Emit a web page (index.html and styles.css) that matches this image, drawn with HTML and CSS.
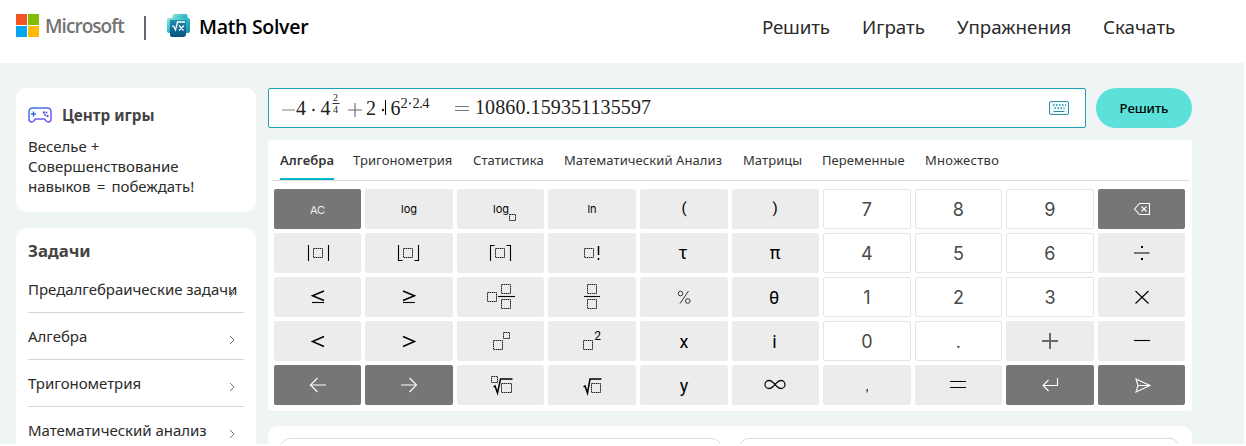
FILE: index.html
```html
<!DOCTYPE html>
<html lang="ru">
<head>
<meta charset="utf-8">
<title>Math Solver</title>
<link rel="stylesheet" href="styles.css">
</head>
<body>
<div class="page">
  <header class="header">
    <svg class="ms-mark" width="24" height="24" viewBox="0 0 24 24"><path fill="#f65325" d="M0 0h11v11H0z"/><path fill="#81bc06" d="M12 0h11v11H12z"/><path fill="#05a6f0" d="M0 12h11v11H0z"/><path fill="#ffba08" d="M12 12h11v11H12z"/></svg>
    <span class="ms-name">Microsoft</span>
    <span class="bar"></span>
    <svg class="app-mark" width="24" height="24" viewBox="0 0 24 24">
      <defs>
        <linearGradient id="ga" x1="0" y1="0" x2="1" y2="1"><stop offset="0" stop-color="#8ceadb"/><stop offset=".5" stop-color="#2fb6c4"/><stop offset="1" stop-color="#1a8fae"/></linearGradient>
        <linearGradient id="gb" x1="0" y1="0" x2="0" y2="1"><stop offset="0" stop-color="#1c8fb0"/><stop offset="1" stop-color="#0b4f7c"/></linearGradient>
      </defs>
      <rect x="5.500" y="0" width="15" height="14" rx="2" fill="url(#ga)"/>
      <rect x="0" y="4" width="23" height="15" rx="2" fill="url(#ga)"/>
      <path d="M3 6h16v14a3 3 0 0 1-3 3H5a2 2 0 0 1-2-2z" fill="url(#gb)"/>
      <path d="M5 12.500l1.500-.5 2 4 2-8H18M12 11.500l4.500 5M17 11.500l-5 5" fill="none" stroke="#fff" stroke-width="1.300"/>
    </svg>
    <span class="app-name">Math Solver</span>
    <nav class="nav"><a class="n1">Решить</a><a class="n2">Играть</a><a class="n3">Упражнения</a><a class="n4">Скачать</a></nav>
  </header>
  <div class="content">
    <aside class="side">
      <section class="card game">
        <h2 class="game-title">
          <svg width="25" height="16" viewBox="0 0 25 16" fill="none"><defs><linearGradient id="gp" x1="0" y1="0" x2="1" y2="1"><stop offset="0" stop-color="#2f7be0"/><stop offset="1" stop-color="#8a4df0"/></linearGradient></defs><path d="M5 1H19.500Q23 1 23 5V12Q23 15 20.500 15Q18.500 15 16.500 12H7.500Q5.500 15 3.500 15Q1 15 1 12V5Q1 1 5 1Z" stroke="url(#gp)" stroke-width="1.500"/><path d="M5.500 4.500v5M3 7h5" stroke="#3f67e3" stroke-width="1.500"/><g fill="#6455ea"><circle cx="16" cy="5.500" r="1.200"/><circle cx="18.500" cy="5.500" r="1"/><circle cx="17" cy="8" r="1"/><circle cx="19.500" cy="9" r="1.200"/></g></svg>
          <span>Центр игры</span>
        </h2>
        <p class="game-text">Веселье +<br>Совершенствование<br><span class="l3">навыков = побеждать!</span></p>
      </section>
      <section class="card tasks">
        <h2 class="tasks-title">Задачи</h2>
        <a class="task"><span>Предалгебраические задачи</span><svg class="chev" viewBox="0 0 6 10"><path d="M1 1l4 4-4 4"/></svg></a>
        <a class="task"><span>Алгебра</span><svg class="chev" viewBox="0 0 6 10"><path d="M1 1l4 4-4 4"/></svg></a>
        <a class="task"><span>Тригонометрия</span><svg class="chev" viewBox="0 0 6 10"><path d="M1 1l4 4-4 4"/></svg></a>
        <a class="task"><span>Математический анализ</span><svg class="chev" viewBox="0 0 6 10"><path d="M1 1l4 4-4 4"/></svg></a>
      </section>
    </aside>
    <main class="main">
      <div class="entry">
        <div class="field">
          <svg class="formula" width="400" height="38" viewBox="0 0 400 38">
            <path d="M13 21h13" stroke="#999" stroke-width="1.200"/><path d="M79 21h14M86 14v14" stroke="#666" stroke-width="1.100"/>
            <text x="27" y="26">4</text><circle cx="44.500" cy="21" r="1.200"/>
            <text x="51.500" y="26">4</text>
            <text class="tiny" x="64" y="12">2</text><path d="M63.500 14.500h7" stroke="#333"/><text class="tiny" x="64" y="23.500">4</text>
            <text x="97" y="26">2</text><circle cx="114" cy="21" r="1.200"/>
            <path d="M116.500 11v15" stroke="#000"/>
            <text x="121.500" y="26">6</text>
            <text class="sup" x="131.500" y="18.500">2</text><circle cx="141" cy="14.500" r="1"/><text class="sup" x="143.500" y="18.500" textLength="17">2.4</text>
            <path d="M186 17.500h14M186 21.500h14" stroke="#777"/>
            <text x="206" y="25" textLength="176">10860.159351135597</text>
          </svg>
          <svg class="kbd" width="21" height="14" viewBox="0 0 21 14"><rect x=".5" y=".5" width="19" height="13" rx="1.500" fill="#eefafb" stroke="#2f8ba0"/><path d="M4 4h13M5.500 7h10" stroke="#2f8ba0" stroke-width="1.500" stroke-dasharray="1.500 1.500"/><path d="M4.500 10.500h11" stroke="#2f8ba0"/></svg>
        </div>
        <button class="solve">Решить</button>
      </div>
      <div class="pad">
        <div class="tabs"><span class="tab on">Алгебра</span><span class="tab b">Тригонометрия</span><span class="tab c">Статистика</span><span class="tab d">Математический Анализ</span><span class="tab e">Матрицы</span><span class="tab f">Переменные</span><span class="tab g">Множество</span></div>
        <div class="keys">
          <div class="key dark"><svg viewBox="-24 -20 48 40"><text class="s light" x="-.5" y="4.500">AC</text></svg></div>
          <div class="key"><svg viewBox="-24 -20 48 40"><text class="s" y="4">log</text></svg></div>
          <div class="key"><svg viewBox="-24 -20 48 40"><text class="s" y="4">log</text><path class="box" d="M8.500 5.500h6v6h-6z"/></svg></div>
          <div class="key"><svg viewBox="-24 -20 48 40"><text class="s" y="4">ln</text></svg></div>
          <div class="key"><svg viewBox="-24 -20 48 40"><text class="p" y="4">(</text></svg></div>
          <div class="key"><svg viewBox="-24 -20 48 40"><text class="p" y="4">)</text></svg></div>
          <div class="key num">7</div><div class="key num">8</div><div class="key num">9</div>
          <div class="key dark"><svg viewBox="-24 -20 48 40"><path class="w" d="M-6.500 0l5-5.500h10v11h-10zM.5-2.500l5 5M5.500-2.500l-5 5"/></svg></div>

          <div class="key"><svg viewBox="-24 -20 48 40"><path class="k" d="M-9.500-8v16M10.500-8v16"/><path class="box" d="M-4.500-4.500h9v9h-9z"/></svg></div>
          <div class="key"><svg viewBox="-24 -20 48 40"><path class="k" d="M-10.500-8v15.500h4M9.500-8v15.500h-4"/><path class="box" d="M-5.500-4.500h9v9h-9z"/></svg></div>
          <div class="key"><svg viewBox="-24 -20 48 40"><path class="k" d="M-10.500 8v-15.500h4M9.500 8v-15.500h-4"/><path class="box" d="M-5.500-4.500h9v9h-9z"/></svg></div>
          <div class="key"><svg viewBox="-24 -20 48 40"><path class="box" d="M-7.500-4.500h9v9h-9z"/><path class="t" d="M6.500-7v9M6.500 5v2"/></svg></div>
          <div class="key"><svg viewBox="-24 -20 48 40"><text class="m" x="-1" y="6">τ</text></svg></div>
          <div class="key"><svg viewBox="-24 -20 48 40"><text class="m" y="6">π</text></svg></div>
          <div class="key num">4</div><div class="key num">5</div><div class="key num">6</div>
          <div class="key"><svg viewBox="-24 -20 48 40"><path d="M-7 0h15.500" stroke="#777" stroke-width="2"/><path d="M0-7h2v2H0zM0 5h2v2H0z"/></svg></div>

          <div class="key"><svg viewBox="-24 -20 48 40"><path class="t" d="M6-6l-11.500 4.700L6 3.500"/><path class="k" d="M-6 5.500H6"/></svg></div>
          <div class="key"><svg viewBox="-24 -20 48 40"><path class="t" d="M-6-6L5.500-1.300L-6 3.500"/><path class="k" d="M-6 5.500H6"/></svg></div>
          <div class="key"><svg viewBox="-24 -20 48 40"><path class="box" d="M-13.500-4.500h9v9h-9zM.5-12.500h9v9h-9zM.5 2.500h9v9h-9z"/><path class="k" d="M-3-.5h17"/></svg></div>
          <div class="key"><svg viewBox="-24 -20 48 40"><path class="box" d="M-4.500-12.500h9v9h-9zM-4.500 2.500h9v9h-9z"/><path class="k" d="M-8-.5H8"/></svg></div>
          <div class="key"><svg viewBox="-24 -20 48 40"><g class="o"><circle cx="-3.500" cy="-3.500" r="2.300"/><circle cx="3.800" cy="4" r="2.300"/><path d="M4.500-6L-4 6.500"/></g></svg></div>
          <div class="key"><svg viewBox="-24 -20 48 40"><text class="m" x="-1" y="6.500">θ</text></svg></div>
          <div class="key num">1</div><div class="key num">2</div><div class="key num">3</div>
          <div class="key"><svg viewBox="-24 -20 48 40"><path class="k" d="M-5.500-6L7.500 6.500M7.500-6L-5.500 6.500"/></svg></div>

          <div class="key"><svg viewBox="-24 -20 48 40"><path class="t" d="M6-4.500l-11.500 5L6 5.500"/></svg></div>
          <div class="key"><svg viewBox="-24 -20 48 40"><path class="t" d="M-6-4.500L5.500.5L-6 5.500"/></svg></div>
          <div class="key"><svg viewBox="-24 -20 48 40"><path class="box" d="M-7.500-.5h9v9h-9zM2.500-8.500h6v6h-6z"/></svg></div>
          <div class="key"><svg viewBox="-24 -20 48 40"><path class="box" d="M-8.500-.5h9v9h-9z"/><text class="two" x="5.500" y="-1.500">2</text></svg></div>
          <div class="key"><svg viewBox="-24 -20 48 40"><text class="m" y="7">x</text></svg></div>
          <div class="key"><svg viewBox="-24 -20 48 40"><text class="m" x="-.5" y="7">i</text></svg></div>
          <div class="key num">0</div><div class="key num">.</div>
          <div class="key"><svg viewBox="-24 -20 48 40"><path d="M-8 0H8M0-8V8" stroke="#000" stroke-opacity=".55" stroke-width="2"/></svg></div>
          <div class="key"><svg viewBox="-24 -20 48 40"><path class="k" d="M-7-.5H9"/></svg></div>

          <div class="key dark"><svg viewBox="-24 -20 48 40"><path d="M-8 0H8" stroke="#bbb" stroke-width="2"/><path class="w" d="M-.5-7l-7 7 7 7"/></svg></div>
          <div class="key dark"><svg viewBox="-24 -20 48 40"><path d="M-8 0H7" stroke="#bbb" stroke-width="2"/><path class="w" d="M.5-7l7 7-7 7"/></svg></div>
          <div class="key"><svg viewBox="-24 -20 48 40"><path class="box" d="M-9.500-8.500h6v6h-6zM.5-1.500h10v9H.5z"/><path class="t" d="M-7.500 2l1.500-1 2.500 7L-.5-6H11.500"/></svg></div>
          <div class="key"><svg viewBox="-24 -20 48 40"><path class="box" d="M-.5-1.500h9v9h-9z"/><path class="t" d="M-8.500 2l1.500-1 2.500 7L-2-6H9.500"/></svg></div>
          <div class="key"><svg viewBox="-24 -20 48 40"><text class="m" y="7">y</text></svg></div>
          <div class="key"><svg viewBox="-24 -20 48 40"><path class="inf" d="M0 -.5C-3-4-4-4.500-6-4.500a4 4 0 0 0 0 8C-4 3.500-3 3 0-.5C3-4 4-4.500 6-4.500a4 4 0 0 1 0 8C4 3.500 3 3 0-.5Z"/></svg></div>
          <div class="key"><svg viewBox="-24 -20 48 40"><path d="M-.5 4h1.500v1.500l-1 2h-.8l.5-2z" fill="#333"/></svg></div>
          <div class="key"><svg viewBox="-24 -20 48 40"><path class="k" d="M-8-3.500H8M-8 2.500H8"/></svg></div>
          <div class="key dark"><svg viewBox="-24 -20 48 40"><path class="w" d="M7.500-7V.5H-7M-1.500-5l-5.500 5.500 5.500 5.500"/></svg></div>
          <div class="key dark"><svg viewBox="-24 -20 48 40"><path class="w" d="M-5-6L9 .5-5 7l2-6.500zM-3 .5H8"/></svg></div>
        </div>
      </div>
      <div class="results"><div class="result"></div><div class="result"></div></div>
    </main>
  </div>
</div>
</body>
</html>
```
FILE: styles.css
```css
* { box-sizing: border-box; }
body { margin: 0; background: #fff; font-family: "Noto Sans", "Open Sans", sans-serif; color: #2b2b2b; }
.page { width: 1244px; height: 444px; overflow: hidden; background: #eff5f5; }
.header { height: 63px; background: #fff; display: flex; align-items: flex-start; padding-left: 16px; }
.ms-mark { margin-top: 14px; }
.ms-name { margin: 12px 0 0 5px; width: 80px; font: 600 19px/28px "Open Sans", sans-serif; letter-spacing: -.95px; color: #737373; }
.bar { width: 1.5px; height: 24px; margin: 16px 0 0 19px; background: #667; }
.app-mark { margin: 14px 0 0 21.5px; }
.app-name { margin: 13px 0 0 8px; width: 112px; font: 600 19.5px/28px "Open Sans", sans-serif; letter-spacing: -.3px; color: #000; white-space: nowrap; }
.nav { display: flex; margin: 13px 0 0 451px; font-size: 18.8px; line-height: 28px; white-space: nowrap; }
.n1 { width: 100px; letter-spacing: -.2px; }
.n2 { width: 95px; }
.n3 { width: 146px; }
.content { display: flex; gap: 12px; padding: 25px 0 0 16px; }
.side { width: 240px; display: flex; flex-direction: column; gap: 16px; }
.card { background: #fff; border-radius: 10px; padding: 0 12px; }
.game { height: 124px; padding-top: 17px; }
.game-title { margin: 0; display: flex; align-items: center; gap: 9px; font-size: 15.3px; line-height: 20px; color: #444; }
.game-text { margin: 11px 0 0; font-size: 15px; line-height: 20px; white-space: nowrap; }
.l3 { word-spacing: 2.3px; }
.tasks { height: 300px; padding-top: 11px; }
.tasks-title { margin: 0; font-size: 16.8px; line-height: 24px; color: #444; }
.task { display: flex; height: 47px; border-bottom: 1px solid #d6d6d6; font-size: 15px; letter-spacing: -.03px; line-height: 20px; padding-top: 13px; white-space: nowrap; position: relative; }
.tasks-title + .task { height: 50px; padding-top: 16px; }
.chev { position: absolute; right: 9px; bottom: 14px; width: 6px; height: 10px; fill: none; stroke: #777; }
.main { width: 924px; }
.entry { display: flex; gap: 10px; }
.field { width: 818px; height: 40px; border: 1px solid #1f9fb5; border-radius: 2px; background: #fff; display: flex; justify-content: space-between; align-items: center; padding-right: 15px; }
.formula { font: 20px "Liberation Serif", serif; fill: #222; }
.formula .tiny { font-size: 10px; }
.formula .sup { font-size: 14.5px; }
.solve { width: 96px; height: 40px; border: 0; padding: 0; border-radius: 20px; background: #5ce1da; font: 500 13.2px "Noto Sans", sans-serif; letter-spacing: -.1px; color: #000; }
.pad { margin-top: 12px; height: 271px; background: #fff; border-radius: 3px; padding: 0 3px 0 4px; }
.tabs { height: 41px; border-bottom: 1px solid #dcdcdc; display: flex; padding-left: 8px; font-size: 13px; letter-spacing: .08px; line-height: 40px; white-space: nowrap; color: #333; }
.tab { height: 40px; }
.on { width: 54px; font-weight: 600; border-bottom: 2px solid #00b7c8; margin-right: 19px; }
.b { width: 120px; }
.c { width: 91px; }
.d { width: 179px; }
.e { width: 79px; }
.f { width: 103px; }
.g { letter-spacing: .3px; }
.keys { display: grid; grid-template-columns: repeat(10, 87.56px); grid-auto-rows: 40px; gap: 4px; padding: 8px 0 0 1.8px; }
.key { background: #ececec; border-radius: 2px; display: flex; justify-content: center; align-items: center; }
.key svg { width: 48px; height: 40px; text-anchor: middle; font-family: Roboto, sans-serif; }
.dark { background: #767676; }
.num { background: #fff; border: 1px solid #e5e5e5; font: 18px Inter, sans-serif; color: #484848; }
.key .s { font: 11px Inter, sans-serif; }
.key .light { fill: #eee; }
.two { font-size: 12px; }
.p { font-size: 15px; }
.m { font-size: 18px; }
.k { fill: none; stroke: #000; stroke-width: 1.1; }
.t { fill: none; stroke: #000; stroke-width: 1.5; }
.w { fill: none; stroke: #fff; stroke-width: 1.1; }
.o { fill: none; stroke: #333; }
.inf { fill: none; stroke: #111; stroke-width: 1.3; }
.box { fill: none; stroke: #222; stroke-dasharray: 1.6 .5; }
.results { margin-top: 15px; height: 60px; background: #fff; border-radius: 10px; padding: 12px; display: flex; gap: 17px; }
.result { flex: 1; border: 1px solid #ddd; border-radius: 10px; }
```
